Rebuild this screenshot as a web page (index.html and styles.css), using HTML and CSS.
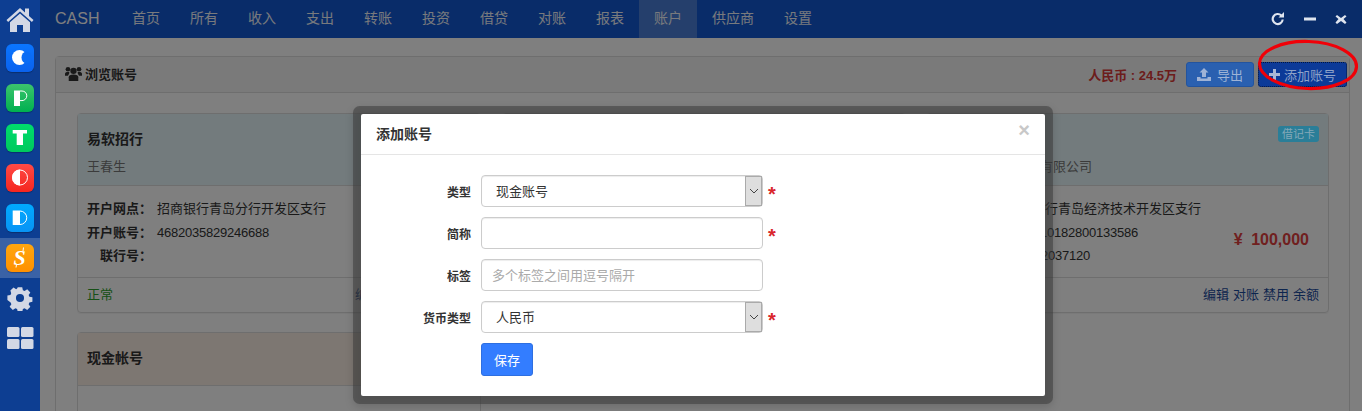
FILE: index.html
```html
<!DOCTYPE html>
<html lang="zh-CN">
<head>
<meta charset="utf-8">
<title>CASH - 账户</title>
<link rel="stylesheet" href="styles.css">
</head>
<body>
<div class="app">
  <aside class="sidebar">
    <a class="side-item side-home"><svg class="side-glyph" width="32" height="28" viewBox="0 0 32 28"><path d="M16 3 2.500 15l1.600 1.900L16 6.400l11.900 10.500 1.600-1.900-4.500-4V3.500h-4v4L16 3Z"/><path d="M16 8.500 6 17.300V27h7v-7h6v7h7v-9.700L16 8.500Z"/></svg></a>
    <a class="side-item"><span class="app-icon app-c"><svg width="28" height="28" viewBox="0 0 28 28"><circle cx="13.500" cy="13.500" r="7.500" fill="#fff"/><ellipse cx="20.500" cy="13.500" rx="5" ry="6" fill="#0a6cf5"/><rect x="20" y="11" width="3" height="5" fill="#0a6cf5"/></svg></span></a>
    <a class="side-item"><span class="app-icon app-p"><svg width="28" height="28" viewBox="0 0 28 28"><path d="M8 6.500h6V22H8z" fill="#fff"/><path d="M14 7h2a4.800 4.800 0 0 1 0 9.600h-2" fill="none" stroke="#fff"/></svg></span></a>
    <a class="side-item"><span class="app-icon app-t"><svg width="28" height="28" viewBox="0 0 28 28"><path d="M6.700 6H21v3.500h-4V21h-6.300V9.500H6.700z" fill="#fff"/></svg></span></a>
    <a class="side-item"><span class="app-icon app-o"><svg width="28" height="28" viewBox="0 0 28 28"><circle cx="14" cy="13.500" r="7.500" fill="none" stroke="#fff" stroke-width="1"/><path d="M14 5.500a8 8 0 0 0 0 16Z" fill="#fff"/></svg></span></a>
    <a class="side-item"><span class="app-icon app-d"><svg width="28" height="28" viewBox="0 0 28 28"><path d="M6.700 6.500H14V21H6.700z" fill="#fff"/><path d="M14 7h0a6.500 6.500 0 0 1 0 13.500" fill="none" stroke="#fff"/></svg></span></a>
    <a class="side-item side-active"><span class="app-icon app-s"><svg width="28" height="28" viewBox="0 0 28 28"><text class="app-s-text" x="13.500" y="21" text-anchor="middle">S</text><path d="M17.500 3.500 17 7M10.500 20.500l-.5 3" fill="none" stroke="#fff"/></svg></span></a>
    <a class="side-item"><svg class="side-glyph" width="26" height="26" viewBox="0 0 26 26"><path fill-rule="evenodd" d="M10.500 1h5l.7 3.400 1.900.8 2.900-1.900 3.500 3.500-1.900 2.900.8 1.900 3.400.7v5l-3.400.7-.8 1.900 1.900 2.900-3.500 3.500-2.900-1.900-1.900.8-.7 3.300h-5l-.7-3.300-1.900-.8-2.900 1.900-3.500-3.500 1.900-2.900-.8-1.900L-1 15.300v-5l3.400-.7.800-1.900L2.300 4.800l3.500-3.500 2.900 1.900 1.100-.8L10.500 1ZM13 8.500a4.500 4.500 0 1 0 0 9 4.500 4.500 0 0 0 0-9Z" transform="translate(1.300 1.300) scale(.9)"/></svg></a>
    <a class="side-item"><svg class="side-glyph" width="28" height="24" viewBox="0 0 28 24"><rect x="1" y="1" width="12.500" height="10" rx="1.500"/><rect x="15" y="1" width="12.500" height="10" rx="1.500"/><rect x="1" y="13" width="12.500" height="10" rx="1.500"/><rect x="15" y="13" width="12.500" height="10" rx="1.500"/></svg></a>
  </aside>

  <div class="main">
    <header class="topbar">
      <span class="brand">CASH</span>
      <nav class="nav">
        <a class="nav-link">首页</a>
        <a class="nav-link">所有</a>
        <a class="nav-link">收入</a>
        <a class="nav-link">支出</a>
        <a class="nav-link">转账</a>
        <a class="nav-link">投资</a>
        <a class="nav-link">借贷</a>
        <a class="nav-link">对账</a>
        <a class="nav-link">报表</a>
        <a class="nav-link nav-active">账户</a>
        <a class="nav-link">供应商</a>
        <a class="nav-link">设置</a>
      </nav>
    </header>

    <section class="panel">
      <div class="panel-head">
        <h2 class="panel-title"><svg class="users-icon" width="17" height="15" viewBox="0 0 16 14"><circle cx="8" cy="4.500" r="3"/><circle cx="2.800" cy="3" r="2.200"/><circle cx="13.200" cy="3" r="2.200"/><path d="M3.500 14V10.500C3.500 8.800 5 8 8 8s4.500.8 4.500 2.500V14Z"/><path d="M0 9V7.500C0 6 1 5.500 2.800 5.500c.6 0 1 .1 1.300.3C4.300 7 3.600 7.500 2.800 9ZM16 9V7.500C16 6 15 5.500 13.200 5.500c-.6 0-1 .1-1.300.3-.2 1.200.5 1.700 1.300 3.200Z"/></svg>浏览账号</h2>
        <div class="panel-tools">
          <span class="total">人民币 : 24.5万</span>
          <button class="btn btn-export"><svg width="14" height="13" viewBox="0 0 14 13"><path d="M7 0 11.500 4.500H9V9H5V4.500H2.500Z"/><path d="M0 9h3.500v1.500h7V9H14v4H0Z"/></svg>导出</button>
          <button class="btn btn-add"><svg width="11" height="11" viewBox="0 0 11 11"><path d="M4 0h3v4h4v3H7v4H4V7H0V4h4Z"/></svg>添加账号</button>
        </div>
      </div>
      <div class="panel-body">
        <article class="card">
          <div class="card-head card-head-info">
            <div class="card-name">易软招行</div>
            <div class="card-owner">王春生</div>
          </div>
          <div class="card-body">
            <dl class="card-info">
              <dt>开户网点：</dt><dd>招商银行青岛分行开发区支行</dd>
              <dt>开户账号：</dt><dd class="digits">4682035829246688</dd>
              <dt>联行号：</dt><dd></dd>
            </dl>
          </div>
          <div class="card-foot">
            <span class="status">正常</span>
            <span class="actions"><a>编辑</a><a>对账</a><a>禁用</a><a>余额</a></span>
          </div>
        </article>
        <article class="card">
          <div class="card-head card-head-info"></div>
          <div class="card-body"></div>
          <div class="card-foot"></div>
        </article>
        <article class="card">
          <div class="card-head card-head-info">
            <span class="badge">借记卡</span>
            <div class="card-name">&nbsp;</div>
            <div class="card-owner card-owner-right">有限公司</div>
          </div>
          <div class="card-body">
            <dl class="card-info">
              <dt>开户网点：</dt><dd>招商银行青岛经济技术开发区支行</dd>
              <dt>开户账号：</dt><dd class="digits">5329110182800133586</dd>
              <dt>联行号：</dt><dd class="digits">308452037120</dd>
            </dl>
            <div class="amount">¥ 100,000</div>
          </div>
          <div class="card-foot card-foot-end">
            <span class="actions"><a>编辑</a><a>对账</a><a>禁用</a><a>余额</a></span>
          </div>
        </article>
        <article class="card">
          <div class="card-head card-head-cash">
            <div class="card-name">现金帐号</div>
          </div>
          <div class="card-body card-body-tall"></div>
        </article>
      </div>
    </section>

    <div class="overlay"></div>

    <div class="window-tools">
      <svg width="14" height="14" viewBox="0 0 14 14"><path d="M11.700 7.500a5 5 0 1 1-1.400-4" fill="none" stroke="#dfe5ef" stroke-width="2.200"/><path d="M13 0v5.500H7.500Z" fill="#dfe5ef"/></svg>
      <svg width="12" height="14" viewBox="0 0 12 14"><rect y="5.500" width="12" height="3" fill="#dfe5ef"/></svg>
      <svg width="12" height="14" viewBox="0 0 12 14"><path d="M2 3 6 6 10 3l1.500 1.500L8.500 7l3 3.500L10 12 6 9 2 12 .5 10.500l3-3.500-3-2.500Z" fill="#dfe5ef"/></svg>
    </div>

    <svg class="highlight" width="106" height="56" viewBox="0 0 106 56"><ellipse cx="52" cy="28" rx="48.500" ry="23.500" transform="rotate(2 52 28)" fill="none" stroke="#f00008" stroke-width="3.200"/></svg>

    <div class="dialog" role="dialog">
      <div class="dialog-head">
        <h3 class="dialog-title">添加账号</h3>
        <span class="dialog-close">×</span>
      </div>
      <form class="dialog-form">
        <label class="form-label">类型</label>
        <div class="select-wrap">
          <select class="form-control"><option>现金账号</option></select>
          <span class="select-arrow"><svg width="10" height="6" viewBox="0 0 10 6"><path d="M1 1l4 4 4-4" fill="none" stroke="#444" stroke-width="1"/></svg></span>
        </div>
        <span class="req">*</span>

        <label class="form-label">简称</label>
        <input class="form-control" type="text">
        <span class="req">*</span>

        <label class="form-label">标签</label>
        <input class="form-control" type="text" placeholder="多个标签之间用逗号隔开">
        <span></span>

        <label class="form-label">货币类型</label>
        <div class="select-wrap">
          <select class="form-control"><option>人民币</option></select>
          <span class="select-arrow"><svg width="10" height="6" viewBox="0 0 10 6"><path d="M1 1l4 4 4-4" fill="none" stroke="#444" stroke-width="1"/></svg></span>
        </div>
        <span class="req">*</span>

        <span></span>
        <div><button class="btn-save" type="button">保存</button></div>
        <span></span>
      </form>
    </div>
  </div>
</div>
</body>
</html>
```

FILE: styles.css
```css
* { box-sizing: border-box; }
html, body { margin: 0; height: 411px; overflow: hidden; }
body {
  font-family: "Liberation Sans", "Noto Sans CJK SC", sans-serif;
  font-size: 13px;
  color: #333;
  background: #fff;
}
.app { display: flex; height: 411px; }

/* sidebar */
.sidebar {
  width: 40px;
  flex: none;
  background: #0d3e92;
  display: flex;
  flex-direction: column;
  padding-top: 38px;
  position: relative;
  z-index: 5;
}
.side-item {
  height: 40px;
  flex: none;
  display: flex;
  align-items: center;
  justify-content: center;
}
.side-home { position: absolute; top: 0; left: 0; width: 40px; height: 38px; }
.side-active { background: #3a62a6; }
.side-glyph { fill: #d3d8e5; display: block; }
.app-icon {
  width: 28px;
  height: 28px;
  border-radius: 6px;
  display: block;
  box-shadow: 0 1px 1px rgba(0, 0, 0, .25);
}
.app-icon svg { display: block; }
.app-c { background: linear-gradient(#0a75ff, #0a62ee); }
.app-p { background: linear-gradient(#3cc46c, #00b050); }
.app-t { background: linear-gradient(#00dc6c, #00c95e); }
.app-o { background: linear-gradient(#ff4a45, #f5261f); }
.app-d { background: linear-gradient(#00aaff, #0893f5); }
.app-s { background: linear-gradient(#ffa60f, #ff9000); }
.app-s-text { font: italic 700 22px "Liberation Serif", serif; fill: #fff; }

/* main */
.main { flex: 1; min-width: 0; position: relative; overflow: hidden; }
.topbar {
  height: 38px;
  background: #1258d2;
  display: flex;
  align-items: stretch;
  padding-left: 15px;
}
.brand {
  font-size: 16px;
  line-height: 38px;
  color: #fff;
  width: 62px;
}
.nav { display: flex; }
.nav-link {
  padding: 0 15px;
  line-height: 37px;
  font-size: 14px;
  color: #f0f4fb;
}
.nav-active { background: #4a7fd8; }

/* panel */
.panel {
  margin: 18px 12px 0 15px;
  border: 1px solid #ddd;
  border-radius: 4px;
}
.panel-head {
  height: 36px;
  background: #f5f5f5;
  border-bottom: 1px solid #ddd;
  display: flex;
  align-items: center;
  justify-content: space-between;
  padding: 0 2px 0 9px;
}
.panel-title {
  margin: -2px 0 0;
  font-size: 13px;
  font-weight: 700;
  display: flex;
  align-items: center;
  gap: 3px;
  color: #333;
}
.users-icon { fill: #333; display: block; }
.panel-tools { display: flex; align-items: center; }
.total { font-weight: 700; color: #d93a38; margin-right: 9px; }
.btn {
  position: relative;
  z-index: 3;
  height: 25px;
  border-radius: 3px;
  border: 1px solid transparent;
  font: inherit;
  display: flex;
  align-items: center;
  justify-content: center;
  gap: 6px;
  padding: 0;
}
.btn-export { width: 68px; background: #2a60b0; color: #9fb3d6; margin-right: 4px; border-color: #23549e; }
.btn-export svg { fill: #9fb3d6; }
.btn-add { width: 89px; background: #0c3a98; color: #8ea2c8; border: 1px dotted #001640; gap: 4px; }
.btn-add svg { fill: #a9b8d6; }

.panel-body {
  padding: 20px 20px 0 21px;
  display: grid;
  grid-template-columns: 404px 404px 403px;
  justify-content: space-between;
  row-gap: 19px;
}
.card {
  border: 1px solid #ddd;
  border-radius: 4px;
  box-shadow: 0 1px 1px rgba(0, 0, 0, .05);
}
.card-head {
  position: relative;
  padding: 15px 9px 0;
  height: 72px;
  border-bottom: 1px solid #ddd;
}
.card-head-info { background: #e6f6fb; }
.card-head-cash { background: #fbeee4; height: 53px; }
.card-name { font-size: 14px; font-weight: 700; line-height: 20px; color: #333; }
.card-owner { font-size: 13px; line-height: 20px; margin-top: 8px; color: #777; }
.card-owner-right { padding-left: 104px; }
.badge {
  position: absolute;
  z-index: 3;
  top: 12px;
  right: 9px;
  width: 41px;
  height: 16px;
  border-radius: 3px;
  background: #2a7e98;
  color: #84a9b8;
  font-size: 11px;
  line-height: 16px;
  text-align: center;
}
.card-body {
  height: 91px;
  padding: 11px 9px 0;
  display: flex;
  justify-content: space-between;
}
.card-body-tall { height: 120px; }
.card-info {
  margin: 0;
  flex: 1;
  display: grid;
  grid-template-columns: 65px 1fr;
  column-gap: 5px;
  grid-auto-rows: 23.500px;
  line-height: 23.500px;
}
.card-info dt { font-weight: 700; text-align: right; color: #333; }
.card-info dd { margin: 0; color: #333; }
.digits { letter-spacing: -.23px; }
.amount {
  align-self: center;
  margin: 6px 10px 0 0;
  font-size: 16px;
  font-weight: 700;
  color: #e0403e;
  word-spacing: 4px;
  line-height: 20px;
}
.card-foot {
  height: 35px;
  border-top: 1px solid #ddd;
  padding: 0 9px;
  display: flex;
  align-items: center;
  justify-content: space-between;
  line-height: 16px;
}
.card-foot-end { justify-content: flex-end; }
.status { color: #2ca02c; }
.actions { display: flex; gap: 4px; color: #1a4a9c; }

/* modal */
.overlay {
  position: absolute;
  inset: 0;
  background: rgba(0, 0, 0, .5);
  z-index: 2;
}
.window-tools {
  position: absolute;
  z-index: 3;
  top: 12px;
  right: 15px;
  display: flex;
  gap: 19px;
}
.window-tools svg { display: block; }
.highlight { position: absolute; z-index: 3; left: 1216px; top: 37px; }
.dialog {
  position: absolute;
  z-index: 4;
  left: 321px;
  top: 114px;
  width: 684px;
  height: 282px;
  background: #fff;
  box-shadow: 0 0 0 8px rgba(60, 60, 60, .55), 0 3px 8px 8px rgba(0, 0, 0, .15);
  border-radius: 2px;
}
.dialog-head {
  height: 41px;
  border-bottom: 1px solid #e5e5e5;
  display: flex;
  align-items: center;
  justify-content: space-between;
  padding: 0 15px 2px;
}
.dialog-title { margin: 0; font-size: 14px; font-weight: 700; color: #333; }
.dialog-close { font-size: 20px; font-weight: 700; color: #c8c8c8; line-height: 1; margin-top: -6px; }
.dialog-form {
  display: grid;
  grid-template-columns: 110px 282px auto;
  column-gap: 10px;
  row-gap: 10px;
  padding: 20px 0 0;
  justify-content: start;
  align-items: center;
}
.form-label { font-size: 12px; font-weight: 700; text-align: right; color: #333; }
.form-control {
  width: 282px;
  height: 32px;
  border: 1px solid #ccc;
  border-radius: 4px;
  background: #fff;
  font: inherit;
  color: #333;
  padding: 0 10px;
  display: block;
  outline: none;
  box-shadow: inset 0 1px 1px rgba(0, 0, 0, .075);
}
select.form-control { appearance: none; padding-left: 14px; }
.form-control::placeholder { color: #aaa; opacity: 1; }
.select-wrap { position: relative; width: 282px; }
.select-arrow {
  position: absolute;
  right: 1px;
  top: 1px;
  width: 17px;
  height: 30px;
  background: #dedede;
  border: 1px solid #aaa;
  display: flex;
  align-items: center;
  justify-content: center;
}
.req { color: #d9262c; font-size: 20px; font-weight: 700; margin-left: -5px; line-height: 18px; height: 12px; }
.btn-save {
  width: 52px;
  height: 33px;
  background: #337dff;
  border: 1px solid #2e6fe0;
  border-radius: 3px;
  color: #fff;
  font: inherit;
  padding: 0;
}
```
